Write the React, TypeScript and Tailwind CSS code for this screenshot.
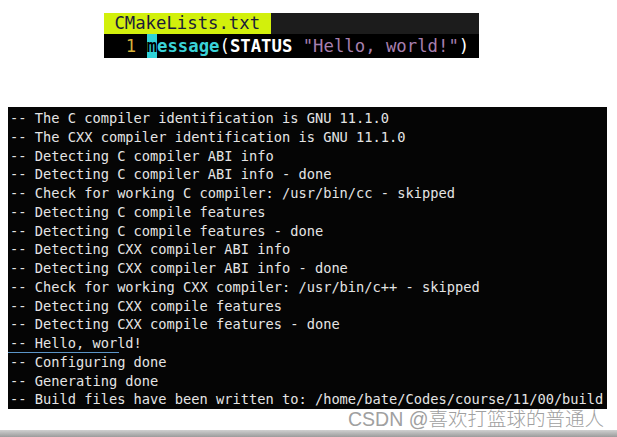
import React from "react";

const lines = [
  "-- The C compiler identification is GNU 11.1.0",
  "-- The CXX compiler identification is GNU 11.1.0",
  "-- Detecting C compiler ABI info",
  "-- Detecting C compiler ABI info - done",
  "-- Check for working C compiler: /usr/bin/cc - skipped",
  "-- Detecting C compile features",
  "-- Detecting C compile features - done",
  "-- Detecting CXX compiler ABI info",
  "-- Detecting CXX compiler ABI info - done",
  "-- Check for working CXX compiler: /usr/bin/c++ - skipped",
  "-- Detecting CXX compile features",
  "-- Detecting CXX compile features - done",
  "-- Hello, world!",
  "-- Configuring done",
  "-- Generating done",
  "-- Build files have been written to: /home/bate/Codes/course/11/00/build",
];

export default function App() {
  return (
    <div className="w-[617px] h-[437px] bg-white flex flex-col overflow-hidden">
      {/* editor */}
      <div
        className="ml-[104px] mt-[13px] w-[375px] h-[45px] flex flex-col bg-black text-[17.3px] whitespace-pre"
        style={{ fontFamily: '"DejaVu Sans Mono", monospace' }}
      >
        <div className="h-[21px] flex bg-[#1c1c1c]">
          <div className="w-[167px] h-full bg-[#d2f00c] text-[#1b1b3a] leading-[21px]">
            {" CMakeLists.txt "}
          </div>
        </div>
        <div className="h-[24px] leading-[24px] flex pl-[1px]">
          <span className="text-[#d8b23a]">{"  1 "}</span>
          <span className="bg-[#2fd2d8] text-black font-bold">m</span>
          <span className="text-[#3ad2d8] font-bold">essage</span>
          <span className="text-white">(</span>
          <span className="text-white font-bold">STATUS</span>
          <span className="text-white"> </span>
          <span className="text-[#a77fae]">"Hello, world!"</span>
          <span className="text-white">)</span>
        </div>
      </div>

      {/* terminal */}
      <div
        className="ml-[8px] mt-[49px] w-[599px] h-[302px] bg-[#050505] pt-[2px] text-[13.7px] text-[#e4e4e4] whitespace-pre"
        style={{ fontFamily: '"DejaVu Sans Mono", monospace' }}
      >
        {lines.map((l, i) => (
          <div key={i} className="h-[18.75px] leading-[18.75px]">
            {l === "-- Hello, world!" ? (
              <span className="inline-block pl-[2px] w-[111px] shadow-[inset_0_-1px_0_#5b95c8]">{l}</span>
            ) : (
              <span className="pl-[2px]">{l}</span>
            )}
          </div>
        ))}
      </div>

      {/* watermark */}
      <div className="h-[21px] flex justify-end pr-[13px]">
        <span
          className="text-[19.5px] leading-[21px] text-[#a0a0a0] font-light"
          style={{ fontFamily: '"Liberation Sans", "Noto Sans CJK SC", sans-serif' }}
        >
          CSDN @喜欢打篮球的普通人
        </span>
      </div>

      {/* bottom bar */}
      <div className="h-[7px] bg-gradient-to-b from-[#d0d0d0] to-[#9c9c9c]" />
    </div>
  );
}
